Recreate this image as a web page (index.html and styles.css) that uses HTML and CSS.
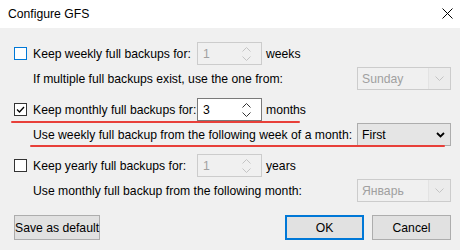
FILE: index.html
```html
<!DOCTYPE html>
<html lang="en">
<head>
    <meta charset="UTF-8">
    <title>Configure GFS</title>
    <link rel="stylesheet" href="styles.css">
</head>
<body>
<div class="dialog">
    <div class="titlebar">
        <span class="title">Configure GFS</span>
        <span class="close">
            <svg width="11" height="11" viewBox="0 0 11 11"><path d="M0.5 0.5 L10.5 10.5 M10.5 0.5 L0.5 10.5" stroke="#000" stroke-width="1" fill="none"/></svg>
        </span>
    </div>

    <div class="content">
        <div class="group">
            <div class="row">
                <span class="check focus"></span>
                <span class="label">Keep weekly full backups for:</span>
                <span class="spin disabled">
                    <span class="spin-value">1</span>
                    <span class="spin-arrows">
                        <svg width="9" height="5" viewBox="0 0 9 5"><path d="M0.5 4.5 L4.5 0.5 L8.5 4.5" stroke="#c4c4c4" fill="none"/></svg>
                        <svg width="9" height="5" viewBox="0 0 9 5"><path d="M0.5 0.5 L4.5 4.5 L8.5 0.5" stroke="#c4c4c4" fill="none"/></svg>
                    </span>
                </span>
                <span class="unit">weeks</span>
            </div>
            <div class="row sub">
                <span class="sub-label">If multiple full backups exist, use the one from:</span>
                <span class="combo disabled">
                    <span class="combo-value">Sunday</span>
                    <span class="combo-arrow">
                        <svg width="9" height="5" viewBox="0 0 9 5"><path d="M0.5 0.5 L4.5 4.5 L8.5 0.5" stroke="#c4c4c4" fill="none"/></svg>
                    </span>
                </span>
            </div>
        </div>

        <div class="group">
            <div class="row marked">
                <span class="check">
                    <svg width="11" height="11" viewBox="0 0 11 11"><path d="M2 5.5 L4.5 8 L9 3" stroke="#000" stroke-width="1.3" fill="none"/></svg>
                </span>
                <span class="label">Keep monthly full backups for:</span>
                <span class="spin">
                    <span class="spin-value">3</span>
                    <span class="spin-arrows">
                        <svg width="9" height="5" viewBox="0 0 9 5"><path d="M0.5 4.5 L4.5 0.5 L8.5 4.5" stroke="#333" fill="none"/></svg>
                        <svg width="9" height="5" viewBox="0 0 9 5"><path d="M0.5 0.5 L4.5 4.5 L8.5 0.5" stroke="#333" fill="none"/></svg>
                    </span>
                </span>
                <span class="unit">months</span>
                <span class="redline first-line"></span>
            </div>
            <div class="row sub marked">
                <span class="sub-label">Use weekly full backup from the following week of a month:</span>
                <span class="combo active">
                    <span class="combo-value">First</span>
                    <span class="combo-arrow">
                        <svg width="9" height="6" viewBox="0 0 9 6"><path d="M1 1 L4.5 4.5 L8 1" stroke="#000" stroke-width="1.8" fill="none"/></svg>
                    </span>
                </span>
                <span class="redline second-line"></span>
            </div>
        </div>

        <div class="group">
            <div class="row">
                <span class="check"></span>
                <span class="label">Keep yearly full backups for:</span>
                <span class="spin disabled">
                    <span class="spin-value">1</span>
                    <span class="spin-arrows">
                        <svg width="9" height="5" viewBox="0 0 9 5"><path d="M0.5 4.5 L4.5 0.5 L8.5 4.5" stroke="#c4c4c4" fill="none"/></svg>
                        <svg width="9" height="5" viewBox="0 0 9 5"><path d="M0.5 0.5 L4.5 4.5 L8.5 0.5" stroke="#c4c4c4" fill="none"/></svg>
                    </span>
                </span>
                <span class="unit">years</span>
            </div>
            <div class="row sub">
                <span class="sub-label">Use monthly full backup from the following month:</span>
                <span class="combo disabled">
                    <span class="combo-value">Январь</span>
                    <span class="combo-arrow">
                        <svg width="9" height="5" viewBox="0 0 9 5"><path d="M0.5 0.5 L4.5 4.5 L8.5 0.5" stroke="#c4c4c4" fill="none"/></svg>
                    </span>
                </span>
            </div>
        </div>

        <div class="buttons">
            <button class="btn wide">Save as default</button>
            <span class="spacer"></span>
            <button class="btn default">OK</button>
            <button class="btn">Cancel</button>
        </div>
    </div>
</div>
</body>
</html>
```

FILE: styles.css
```css
body {
    margin: 0;
    padding: 0;
    font-family: "Liberation Sans", Arial, sans-serif;
    font-size: 12.2px;
    color: #000;
    background-color: #f0f0f0;
    white-space: nowrap;
}

.dialog {
    width: 460px;
    height: 250px;
    background-color: #f0f0f0;
}

.titlebar {
    height: 28px;
    background-color: #fff;
    display: flex;
    align-items: center;
    padding: 0 7px 0 8px;
}

.title {
    flex: 1;
}

.close {
    display: flex;
    margin-top: -1px;
}

.content {
    display: flex;
    flex-direction: column;
    gap: 8px;
    padding: 14px 9px 0 14px;
}

.group {
    display: flex;
    flex-direction: column;
    gap: 2px;
}

.row {
    display: flex;
    align-items: center;
    height: 23px;
    position: relative;
}

.row.sub {
    padding-left: 19px;
}

.check {
    width: 11px;
    height: 11px;
    border: 1px solid #333;
    background-color: #fff;
    margin-right: 6px;
    display: flex;
    align-items: center;
    justify-content: center;
}

.check.focus {
    border-color: #0078d7;
}

.label {
    width: 164px;
}

.sub-label {
    flex: 1;
}

.spin {
    width: 63px;
    height: 21px;
    border: 1px solid #7a7a7a;
    background-color: #fff;
    display: flex;
    align-items: center;
}

.spin.disabled {
    border-color: #cccccc;
    background-color: #f0f0f0;
    color: #a0a0a0;
}

.spin-value {
    flex: 1;
    padding-left: 5px;
}

.spin-arrows {
    display: flex;
    flex-direction: column;
    gap: 4px;
    padding-right: 10px;
}

.spin-arrows svg {
    display: block;
}

.unit {
    margin-left: 4px;
}

.combo {
    width: 92px;
    height: 21px;
    border: 1px solid #cccccc;
    background-color: #f0f0f0;
    display: flex;
    align-items: center;
}

.combo.disabled {
    color: #a0a0a0;
}

.combo.active {
    border-color: #adadad;
    background-color: #e5e5e5;
}

.combo-value {
    flex: 1;
    padding-left: 4px;
}

.combo-arrow {
    width: 21px;
    height: 21px;
    display: flex;
    align-items: center;
    justify-content: center;
    border-left: 1px solid #e3e3e3;
    background-color: #ececec;
}

.combo.active .combo-arrow {
    border-left: none;
    background-color: transparent;
    width: 20px;
}

.redline {
    position: absolute;
    height: 2px;
    background-color: #e8403a;
    border-radius: 1px;
}

.first-line {
    left: -3px;
    width: 289px;
    bottom: -2px;
}

.second-line {
    left: 16px;
    width: 415px;
    bottom: -1px;
}

.buttons {
    display: flex;
    gap: 8px;
    margin-top: 5px;
}

.spacer {
    flex: 1;
}

.btn {
    font-family: "Liberation Sans", Arial, sans-serif;
    font-size: 12.2px;
    color: #000;
    width: 79px;
    height: 25px;
    padding: 0;
    background-color: #e1e1e1;
    border: 1px solid #adadad;
}

.btn.wide {
    width: 86px;
}

.btn.default {
    border: 2px solid #0078d7;
}
```
